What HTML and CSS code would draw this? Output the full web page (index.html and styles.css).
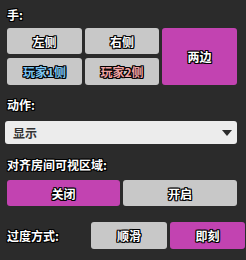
FILE: index.html
```html
<!DOCTYPE html>
<html lang="zh-CN">
<head>
    <meta charset="UTF-8">
    <title>手设置</title>
    <link rel="stylesheet" href="styles.css">
</head>
<body>
    <div class="panel">
        <div class="label label-hand">手:</div>
        <div class="hand-grid">
            <div class="btn">左侧</div>
            <div class="btn">右侧</div>
            <div class="btn active both">两边</div>
            <div class="btn"><span class="p1">玩家1侧</span></div>
            <div class="btn"><span class="p2">玩家2侧</span></div>
        </div>

        <div class="label label-action">动作:</div>
        <div class="select">
            <span>显示</span>
            <span class="arrow"></span>
        </div>

        <div class="label label-align">对齐房间可视区域:</div>
        <div class="pair">
            <div class="btn active">关闭</div>
            <div class="btn">开启</div>
        </div>

        <div class="ease-row">
            <div class="label">过度方式:</div>
            <div class="btn">顺滑</div>
            <div class="btn active">即刻</div>
        </div>
    </div>
</body>
</html>
```

FILE: styles.css
```css
body {
    margin: 0;
    background-color: #2b2b2b;
    font-family: 'Noto Sans CJK SC', 'Noto Sans', sans-serif;
    font-weight: bold;
    font-size: 12px;
    color: #fff;
}
.panel {
    width: 246px;
    height: 260px;
    padding: 0 0 0 7px;
    box-sizing: border-box;
    overflow: hidden;
}
.label {
    height: 12px;
    line-height: 12px;
    text-shadow: 1px 0 #000, -1px 0 #000, 0 1px #000, 0 -1px #000,
        1px 1px #000, -1px -1px #000, 1px -1px #000, -1px 1px #000;
}
.label-hand {
    padding-top: 9px;
    margin-bottom: 7px;
}
.btn {
    display: flex;
    align-items: center;
    justify-content: center;
    background-color: #c8c8c8;
    border-radius: 3px;
    text-shadow: 1px 0 #000, -1px 0 #000, 0 1px #000, 0 -1px #000,
        1px 1px #000, -1px -1px #000, 1px -1px #000, -1px 1px #000;
}
.btn.active {
    background-color: #c243b1;
}
.hand-grid {
    display: grid;
    grid-template-columns: 75px 74px 75px;
    grid-template-rows: 26px 27px;
    column-gap: 3px;
    row-gap: 4px;
}
.both {
    grid-column: 3;
    grid-row: 1 / 3;
}
.p1 {
    color: #7cc6f4;
}
.p2 {
    color: #f2a3a3;
}
.label-action {
    margin-top: 14px;
}
.select {
    display: flex;
    align-items: center;
    justify-content: space-between;
    margin: 10px 0 0 -2px;
    width: 232px;
    height: 23px;
    padding: 0 5px 0 8px;
    box-sizing: border-box;
    background-color: #ececec;
    border-radius: 3px;
    color: #333;
}
.arrow {
    width: 0;
    height: 0;
    border-left: 5px solid transparent;
    border-right: 5px solid transparent;
    border-top: 6px solid #2b2b2b;
}
.label-align {
    margin-top: 15px;
}
.pair {
    display: grid;
    grid-template-columns: 113px 114px;
    column-gap: 3px;
    height: 26px;
    margin-top: 9px;
}
.ease-row {
    display: grid;
    grid-template-columns: 81px 76px 75px;
    column-gap: 3px;
    height: 27px;
    margin-top: 16px;
    align-items: stretch;
}
.ease-row .label {
    align-self: center;
}
```
